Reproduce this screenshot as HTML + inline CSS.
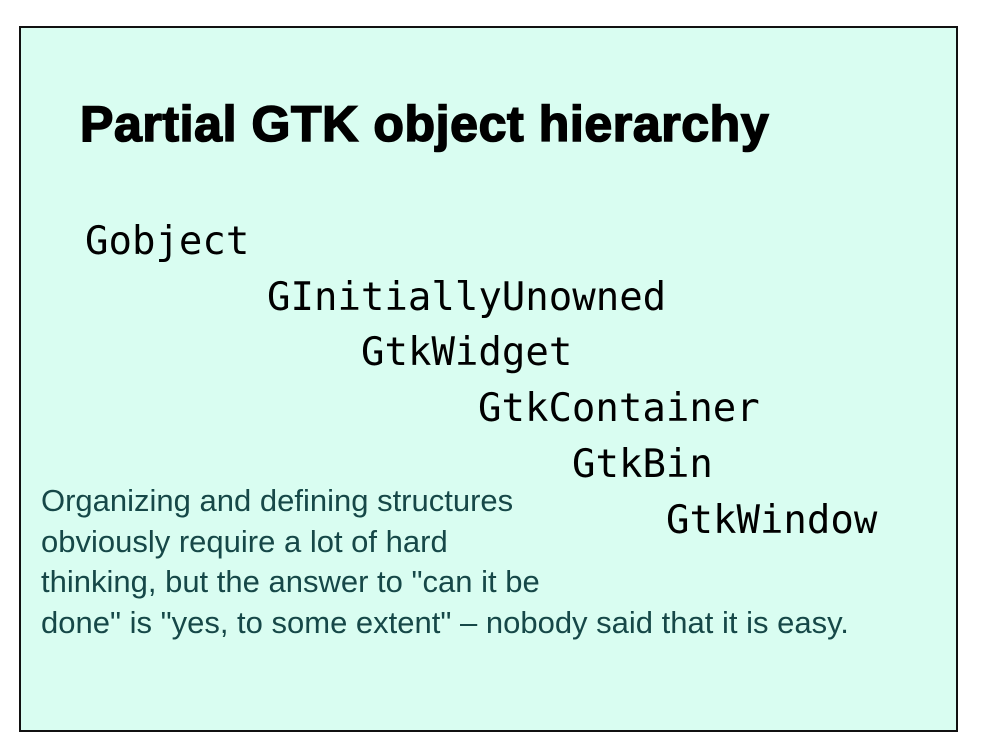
<!DOCTYPE html>
<html><head><style>
body{margin:0;width:986px;height:756px;background:#fff;position:relative;overflow:hidden}
.box{position:absolute;left:19px;top:26px;width:935px;height:702px;border:2px solid #111;background:#d9fdf1}
.t{position:absolute;left:80px;top:95px;font:bold 50px "Liberation Sans",sans-serif;-webkit-text-stroke:1.6px #000;color:#000;white-space:nowrap;letter-spacing:0.6px}
.m{position:absolute;font:39px "DejaVu Sans Mono","Liberation Mono",monospace;color:#000;white-space:nowrap;letter-spacing:0px}
.p{position:absolute;left:41px;top:481px;font:31px/40.5px "Liberation Sans",sans-serif;color:#164848;white-space:nowrap}
</style></head><body>
<div class="box"></div>
<div class="t">Partial GTK object hierarchy</div>
<div class="m" style="left:85px;top:219px">Gobject</div>
<div class="m" style="left:267px;top:275px">GInitiallyUnowned</div>
<div class="m" style="left:361px;top:330px">GtkWidget</div>
<div class="m" style="left:478px;top:386px">GtkContainer</div>
<div class="m" style="left:572px;top:442px">GtkBin</div>
<div class="m" style="left:666px;top:498px">GtkWindow</div>
<div class="p">Organizing and defining structures<br>obviously require a lot of hard<br>thinking, but the answer to "can it be<br>done" is "yes, to some extent" – nobody said that it is easy.</div>
</body></html>
